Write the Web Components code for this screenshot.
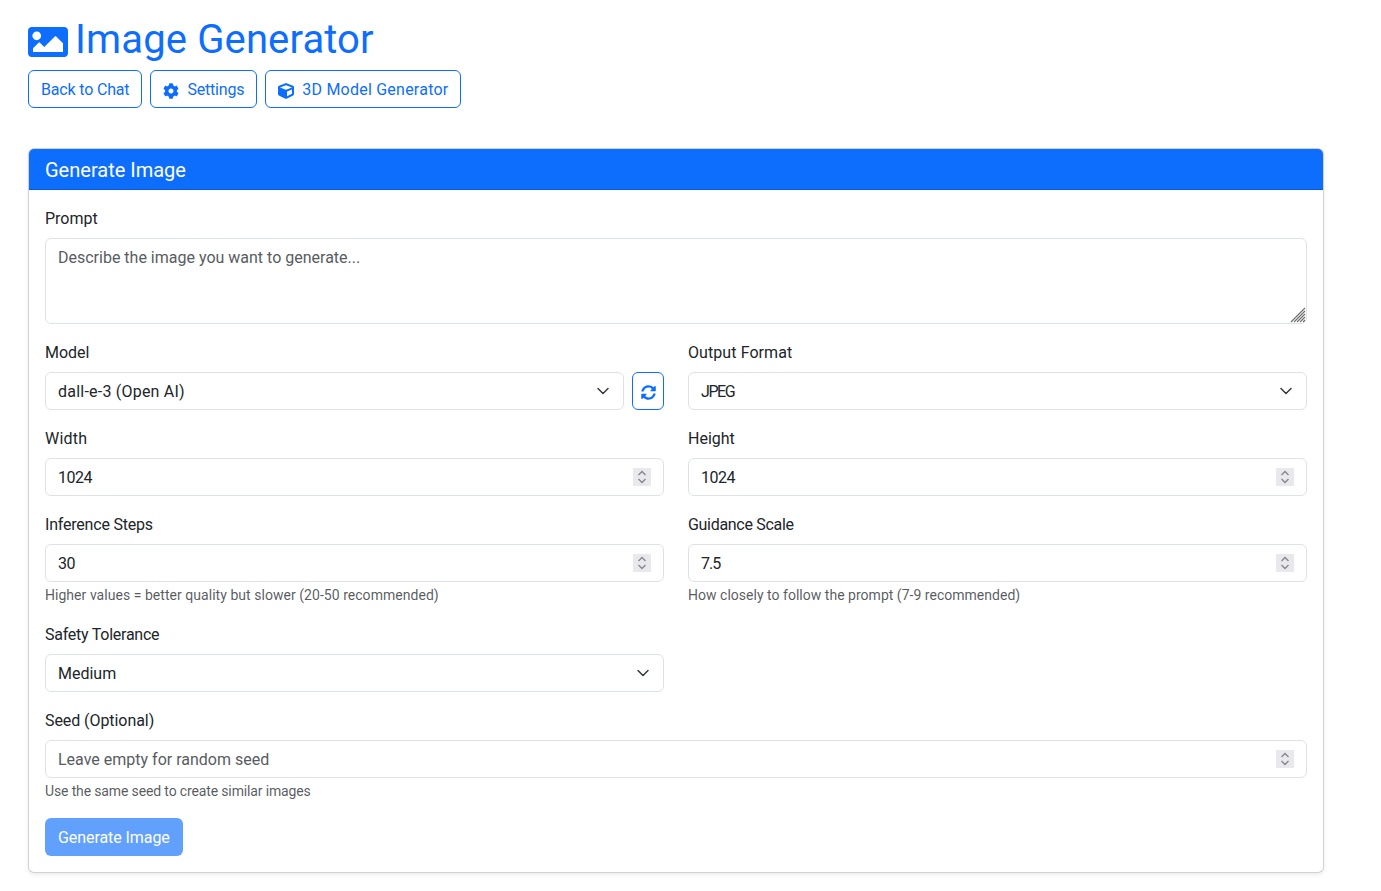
<!doctype html>
<html lang="en">
<head>
<meta charset="utf-8">
<title>Image Generator</title>
<style>
    html, body { margin: 0; background: #fff; }
    body {
        font-family: Roboto, "Liberation Sans", sans-serif;
        font-size: 16px;
        line-height: 24px;
        color: #212529;
    }
</style>
</head>
<body>
<image-generator-page>
    <page-title>Image Generator</page-title>
    <nav-bar slot="nav">
        <nav-button style="letter-spacing: -.17px">Back to Chat</nav-button>
        <nav-button icon="cog" style="letter-spacing: -.2px">Settings</nav-button>
        <nav-button icon="cube" style="letter-spacing: .23px">3D Model Generator</nav-button>
    </nav-bar>
    <form-card slot="card" heading="Generate Image">
        <form-field label="Prompt">
            <area-box>Describe the image you want to generate...</area-box>
        </form-field>
        <field-row>
            <form-field label="Model">
                <model-picker style="letter-spacing: .22px">dall-e-3 (Open AI)</model-picker>
            </form-field>
            <form-field label="Output Format" style="--label-spacing: .08px">
                <select-box style="letter-spacing: -1.4px">JPEG</select-box>
            </form-field>
        </field-row>
        <field-row>
            <form-field label="Width" style="--label-spacing: .2px"><number-box style="letter-spacing: -.5px">1024</number-box></form-field>
            <form-field label="Height"><number-box style="letter-spacing: -.5px">1024</number-box></form-field>
        </field-row>
        <field-row>
            <form-field label="Inference Steps" hint="Higher values = better quality but slower (20-50 recommended)" style="--label-spacing: -.2px; --hint-spacing: .04px">
                <number-box style="letter-spacing: -.5px">30</number-box>
            </form-field>
            <form-field label="Guidance Scale" hint="How closely to follow the prompt (7-9 recommended)" style="--label-spacing: -.3px; --hint-spacing: .02px">
                <number-box style="letter-spacing: -1px">7.5</number-box>
            </form-field>
        </field-row>
        <field-row>
            <form-field label="Safety Tolerance" style="--label-spacing: -.25px"><select-box>Medium</select-box></form-field>
            <div></div>
        </field-row>
        <form-field label="Seed (Optional)" hint="Use the same seed to create similar images" style="--label-spacing: -.07px; --hint-spacing: -.14px">
            <number-box placeholder>Leave empty for random seed</number-box>
        </form-field>
        <submit-button style="letter-spacing: -.07px">Generate Image</submit-button>
    </form-card>
</image-generator-page>

<script>
    const ICONS = {
        image: ['0 64 512 384', 'M464 448H48c-26.51 0-48-21.49-48-48V112c0-26.51 21.49-48 48-48h416c26.51 0 48 21.49 48 48v288c0 26.51-21.49 48-48 48zM112 120c-30.928 0-56 25.072-56 56s25.072 56 56 56 56-25.072 56-56-25.072-56-56-56zM64 384h384V272l-87.515-87.515c-4.686-4.686-12.284-4.686-16.971 0L208 320l-55.515-55.515c-4.686-4.686-12.284-4.686-16.971 0L64 336v48z'],
        cog: ['0 0 512 512', 'M487.4 315.7l-42.6-24.6c4.3-23.2 4.3-47 0-70.2l42.6-24.6c4.9-2.8 7.1-8.6 5.5-14-11.1-35.6-30-67.8-54.7-94.6-3.8-4.1-10-5.1-14.8-2.3L380.8 110c-17.9-15.4-38.5-27.3-60.8-35.1V25.8c0-5.6-3.9-10.5-9.4-11.7-36.7-8.2-74.3-7.8-109.2 0-5.5 1.2-9.4 6.1-9.4 11.7V75c-22.2 7.9-42.8 19.8-60.8 35.1L88.7 85.5c-4.9-2.8-11-1.9-14.8 2.3-24.7 26.7-43.6 58.9-54.7 94.6-1.7 5.4.6 11.2 5.5 14L67.3 221c-4.3 23.2-4.3 47 0 70.2l-42.6 24.6c-4.9 2.8-7.1 8.6-5.5 14 11.1 35.6 30 67.8 54.7 94.6 3.8 4.1 10 5.1 14.8 2.3l42.6-24.6c17.9 15.4 38.5 27.3 60.8 35.1v49.2c0 5.6 3.9 10.5 9.4 11.7 36.7 8.2 74.3 7.8 109.2 0 5.5-1.2 9.4-6.1 9.4-11.7v-49.2c22.2-7.9 42.8-19.8 60.8-35.1l42.6 24.6c4.9 2.8 11 1.9 14.8-2.3 24.7-26.7 43.6-58.9 54.7-94.6 1.5-5.5-.7-11.3-5.6-14.1zM256 336c-44.1 0-80-35.9-80-80s35.9-80 80-80 80 35.9 80 80-35.9 80-80 80z'],
        cube: ['0 0 512 512', 'M239.1 6.3l-208 78c-18.7 7-31.1 25-31.1 45v225.1c0 18.2 10.3 34.8 26.5 42.9l208 104c13.5 6.8 29.4 6.8 42.9 0l208-104c16.3-8.1 26.5-24.8 26.5-42.9V129.3c0-20-12.4-37.9-31.1-44.9l-208-78C262 2.2 250 2.2 239.1 6.3zM256 68.4l192 72v1.1l-192 78-192-78v-1.1l192-72zm32 356V275.5l160-65v133.9l-160 80z'],
        sync: ['0 0 512 512', 'M370.72 133.28C339.458 104.008 298.888 87.962 255.848 88c-77.458.068-144.328 53.178-162.791 126.85-1.344 5.363-6.122 9.15-11.651 9.15H24.103c-7.498 0-13.194-6.807-11.807-14.176C33.933 94.924 134.813 8 256 8c66.448 0 126.791 26.136 171.315 68.685L463.03 40.97C478.149 25.851 504 36.559 504 57.941V192c0 13.255-10.745 24-24 24H345.941c-21.382 0-32.09-25.851-16.971-40.971l41.75-41.749zM32 296h134.059c21.382 0 32.09 25.851 16.971 40.971l-41.75 41.75c31.262 29.273 71.835 45.319 114.876 45.28 77.418-.07 144.315-53.144 162.787-126.849 1.344-5.363 6.122-9.15 11.651-9.15h57.304c7.498 0 13.194 6.807 11.807 14.176C478.067 417.076 377.187 504 256 504c-66.448 0-126.791-26.136-171.315-68.685L48.97 471.03C33.851 486.149 8 475.441 8 454.059V320c0-13.255 10.745-24 24-24z']
    }

    function iconSvg(name, width, height) {
        const [box, d] = ICONS[name]
        return `<svg width="${width}" height="${height}" viewBox="${box}" fill="currentColor" aria-hidden="true"><path d="${d}"/></svg>`
    }

    // every element is just a shadow root with its own styles and markup
    class ShadowElement extends HTMLElement {
        constructor() {
            super()
            this.attachShadow({ mode: 'open' })
            this.shadowRoot.innerHTML = this.render()
        }
    }

    const BOX = `
        display: flex;
        align-items: center;
        box-sizing: border-box;
        height: 38px;
        background: #fff;
        border: 1px solid #dee2e6;
        border-radius: 6px;
    `

    const CHEVRON = `<svg width="16" height="16" viewBox="0 0 16 16" fill="none" stroke="#343a40" stroke-width="1.5" stroke-linecap="round" stroke-linejoin="round"><path d="m3 5.5 5 5 5-5"/></svg>`

    class ImageGeneratorPage extends ShadowElement {
        render() {
            return `
            <style>
                :host { display: block; padding: 16px 57px 18px 28px; }
                .nav { margin-top: 8px; margin-bottom: 40px; }
            </style>
            <slot></slot>
            <div class="nav"><slot name="nav"></slot></div>
            <slot name="card"></slot>
            `
        }
    }

    class PageTitle extends ShadowElement {
        render() {
            return `
            <style>
                :host {
                    display: flex;
                    align-items: center;
                    gap: 7px;
                    height: 46px;
                    color: #0d6efd;
                    font-size: 40px;
                    line-height: 46px;
                    font-weight: 400;
                    letter-spacing: .14px;
                }
                svg { margin-top: 6px; }
                slot { display: block; padding-top: 2px; }
            </style>
            ${iconSvg('image', 40, 30)}<slot></slot>
            `
        }
    }

    class NavBar extends ShadowElement {
        render() {
            return `
            <style>
                :host { display: flex; gap: 8px; }
            </style>
            <slot></slot>
            `
        }
    }

    class NavButton extends ShadowElement {
        render() {
            const icon = this.getAttribute('icon')
            return `
            <style>
                :host {
                    display: flex;
                    align-items: center;
                    gap: 8px;
                    box-sizing: border-box;
                    height: 38px;
                    padding: 0 12px;
                    color: #0d6efd;
                    border: 1px solid #0d6efd;
                    border-radius: 6px;
                    white-space: nowrap;
                }
                svg { margin-top: 4px; }
                slot { display: block; padding-top: 2px; }
            </style>
            ${icon ? iconSvg(icon, 16, 16) : ''}<slot></slot>
            `
        }
    }

    class FormCard extends ShadowElement {
        render() {
            return `
            <style>
                :host {
                    display: block;
                    background: #fff;
                    border: 1px solid rgba(0, 0, 0, .175);
                    border-radius: 6px;
                    box-shadow: 0 2px 4px rgba(0, 0, 0, .075);
                    overflow: hidden;
                }
                .head {
                    box-sizing: border-box;
                    height: 41px;
                    padding: 9px 16px 7px;
                    background: #0d6efd;
                    color: #fff;
                    font-size: 20px;
                    line-height: 24px;
                    border-bottom: 1px solid rgba(0, 0, 0, .175);
                }
                .body { display: flex; flex-direction: column; gap: 16px; padding: 16px; }
            </style>
            <div class="head">${this.getAttribute('heading')}</div>
            <div class="body"><slot></slot></div>
            `
        }
    }

    class FieldRow extends ShadowElement {
        render() {
            return `
            <style>
                :host { display: grid; grid-template-columns: 1fr 1fr; gap: 24px; }
            </style>
            <slot></slot>
            `
        }
    }

    class FormField extends ShadowElement {
        render() {
            const hint = this.getAttribute('hint')
            return `
            <style>
                :host { display: block; min-width: 0; }
                .label {
                    padding-top: 1px;
                    margin-bottom: 7px;
                    letter-spacing: var(--label-spacing, 0);
                }
                .hint {
                    margin-top: 3px;
                    padding-bottom: 1px;
                    font-size: 14px;
                    line-height: 20px;
                    color: rgba(33, 37, 41, .75);
                    letter-spacing: var(--hint-spacing, 0);
                }
            </style>
            <div class="label">${this.getAttribute('label')}</div>
            <slot></slot>
            ${hint ? `<div class="hint">${hint}</div>` : ''}
            `
        }
    }

    class AreaBox extends ShadowElement {
        render() {
            return `
            <style>
                :host {
                    display: block;
                    position: relative;
                    box-sizing: border-box;
                    height: 86px;
                    padding: 7px 12px 5px;
                    color: #595c5f;
                    background: #fff;
                    border: 1px solid #dee2e6;
                    border-radius: 6px;
                }
                svg { position: absolute; right: 0; bottom: 0; }
            </style>
            <slot></slot>
            <svg width="16" height="16" viewBox="0 0 16 16" stroke="#6e6e6e" stroke-width="1.1"><path d="M1 15 15 1M4 15 15 4M7 15l8-8M10 15l5-5M13 15l2-2"/></svg>
            `
        }
    }

    class SelectBox extends ShadowElement {
        render() {
            return `
            <style>
                :host { ${BOX} justify-content: space-between; padding: 0 12px; }
                slot { display: block; padding-top: 2px; }
            </style>
            <slot></slot>${CHEVRON}
            `
        }
    }

    class ModelPicker extends ShadowElement {
        render() {
            return `
            <style>
                :host { display: flex; gap: 8px; }
                select-box { flex: 1; min-width: 0; }
                .refresh {
                    display: flex;
                    align-items: center;
                    justify-content: center;
                    box-sizing: border-box;
                    width: 32px;
                    height: 38px;
                    color: #0d6efd;
                    border: 1px solid #0d6efd;
                    border-radius: 6px;
                }
                .refresh svg { margin-top: 3px; }
            </style>
            <select-box><slot></slot></select-box>
            <div class="refresh">${iconSvg('sync', 15, 15)}</div>
            `
        }
    }

    class NumberBox extends ShadowElement {
        render() {
            return `
            <style>
                :host { ${BOX} justify-content: space-between; padding: 0 12px; }
                :host([placeholder]) { color: #595c5f; }
                slot { display: block; padding-top: 2px; }
                .spin {
                    display: flex;
                    align-items: center;
                    justify-content: center;
                    width: 18px;
                    height: 18px;
                    background: #e9e9ed;
                }
            </style>
            <slot></slot>
            <div class="spin">
                <svg width="10" height="14" viewBox="0 0 10 14" fill="none" stroke="#85858c" stroke-width="1.3"><path d="M1.5 5 5 1.5 8.5 5M1.5 9 5 12.5 8.5 9"/></svg>
            </div>
            `
        }
    }

    class SubmitButton extends ShadowElement {
        render() {
            return `
            <style>
                :host {
                    display: block;
                    align-self: flex-start;
                    box-sizing: border-box;
                    height: 38px;
                    padding: 8px 13px 6px;
                    color: #fff;
                    background: #0d6efd;
                    border-radius: 6px;
                    opacity: .65;
                    white-space: nowrap;
                }
            </style>
            <slot></slot>
            `
        }
    }

    customElements.define('image-generator-page', ImageGeneratorPage)
    customElements.define('page-title', PageTitle)
    customElements.define('nav-bar', NavBar)
    customElements.define('nav-button', NavButton)
    customElements.define('form-card', FormCard)
    customElements.define('field-row', FieldRow)
    customElements.define('form-field', FormField)
    customElements.define('area-box', AreaBox)
    customElements.define('select-box', SelectBox)
    customElements.define('model-picker', ModelPicker)
    customElements.define('number-box', NumberBox)
    customElements.define('submit-button', SubmitButton)
</script>
</body>
</html>
